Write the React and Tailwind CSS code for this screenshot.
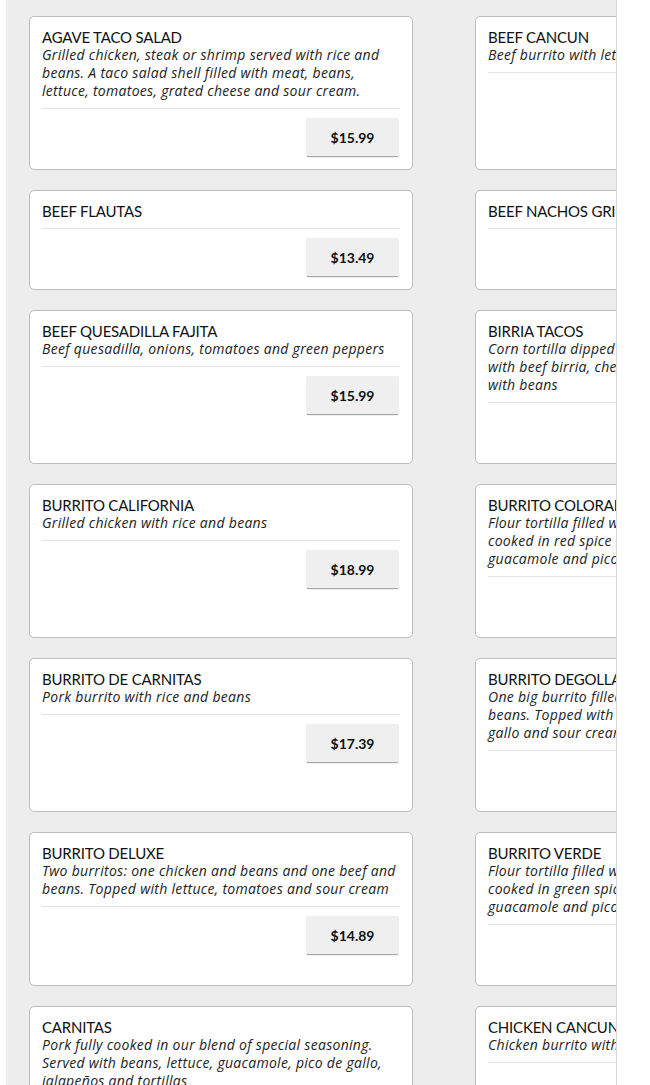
const items = [
  {
    name: 'AGAVE TACO SALAD',
    desc: 'Grilled chicken, steak or shrimp served with rice and beans. A taco salad shell filled with meat, beans, lettuce, tomatoes, grated cheese and sour cream.',
    price: '$15.99',
  },
  {
    name: 'BEEF CANCUN',
    desc: 'Beef burrito with lettuce, tomatoes and sour cream',
    price: '$15.99',
  },
  { name: 'BEEF FLAUTAS', price: '$13.49' },
  { name: 'BEEF NACHOS GRILLED', price: '$14.99' },
  {
    name: 'BEEF QUESADILLA FAJITA',
    desc: 'Beef quesadilla, onions, tomatoes and green peppers',
    price: '$15.99',
  },
  {
    name: 'BIRRIA TACOS',
    desc: 'Corn tortilla dipped in our birria consommé and filled with beef birria, cheese, onions and cilantro. Served with beans',
    price: '$16.99',
  },
  {
    name: 'BURRITO CALIFORNIA',
    desc: 'Grilled chicken with rice and beans',
    price: '$18.99',
  },
  {
    name: 'BURRITO COLORADO',
    desc: 'Flour tortilla filled with grilled steak or pulled chicken cooked in red spice sauce. Topped with queso fresco, guacamole and pico de gallo',
    price: '$17.39',
  },
  {
    name: 'BURRITO DE CARNITAS',
    desc: 'Pork burrito with rice and beans',
    price: '$17.39',
  },
  {
    name: 'BURRITO DEGOLLADO',
    desc: 'One big burrito filled with steak or chicken, rice and beans. Topped with cheese sauce, lettuce, and pico de gallo and sour cream',
    price: '$18.99',
  },
  {
    name: 'BURRITO DELUXE',
    desc: 'Two burritos: one chicken and beans and one beef and beans. Topped with lettuce, tomatoes and sour cream',
    price: '$14.89',
  },
  {
    name: 'BURRITO VERDE',
    desc: 'Flour tortilla filled with grilled steak or pulled chicken cooked in green spice sauce. Topped with sour cream, guacamole and pico de gallo',
    price: '$17.39',
  },
  {
    name: 'CARNITAS',
    desc: 'Pork fully cooked in our blend of special seasoning. Served with beans, lettuce, guacamole, pico de gallo, jalapeños and tortillas',
    price: '$16.99',
  },
  {
    name: 'CHICKEN CANCUN',
    desc: 'Chicken burrito with lettuce, tomatoes and sour cream',
    price: '$15.99',
  },
]

function MenuCard({ name, desc, price }) {
  return (
    <div className="flex flex-col bg-white border border-[#bdbdbd] rounded-[5px] pt-[11px] pb-[13px] pl-[12px] pr-[12px]">
      <h3 className="text-[15px] leading-[18px] text-[#111] tracking-[-0.2px] font-['Lato',sans-serif]">{name}</h3>
      {desc && (
        <p className="text-[14px] leading-[18px] italic text-[#222] tracking-[0.3px] font-['Open_Sans',sans-serif]">
          {desc}
        </p>
      )}
      <div className="mt-[8px] border-t border-[#e3e3e3]" />
      <div className="mt-[9px] flex justify-end pr-[2px]">
        <button
          type="button"
          className="w-[91px] h-[38px] bg-[#efefef] shadow-[0_1px_1px_rgba(0,0,0,0.35)] text-[14px] font-bold text-[#111] font-['Lato',sans-serif]"
        >
          {price}
        </button>
      </div>
    </div>
  )
}

export default function App() {
  return (
    <div className="flex h-[1085px] overflow-hidden bg-white">
      <div className="w-[6px] shrink-0 bg-white" />
      <div className="w-[611px] shrink-0 overflow-hidden bg-[#ededed] border-r border-[#d8d8d8]">
        <div className="grid grid-cols-[384px_384px] gap-x-[62px] gap-y-[20px] pl-[23px] pt-[16px]">
          {items.map((item) => (
            <MenuCard key={item.name} {...item} />
          ))}
        </div>
      </div>
      <div className="flex-1 bg-white" />
    </div>
  )
}
